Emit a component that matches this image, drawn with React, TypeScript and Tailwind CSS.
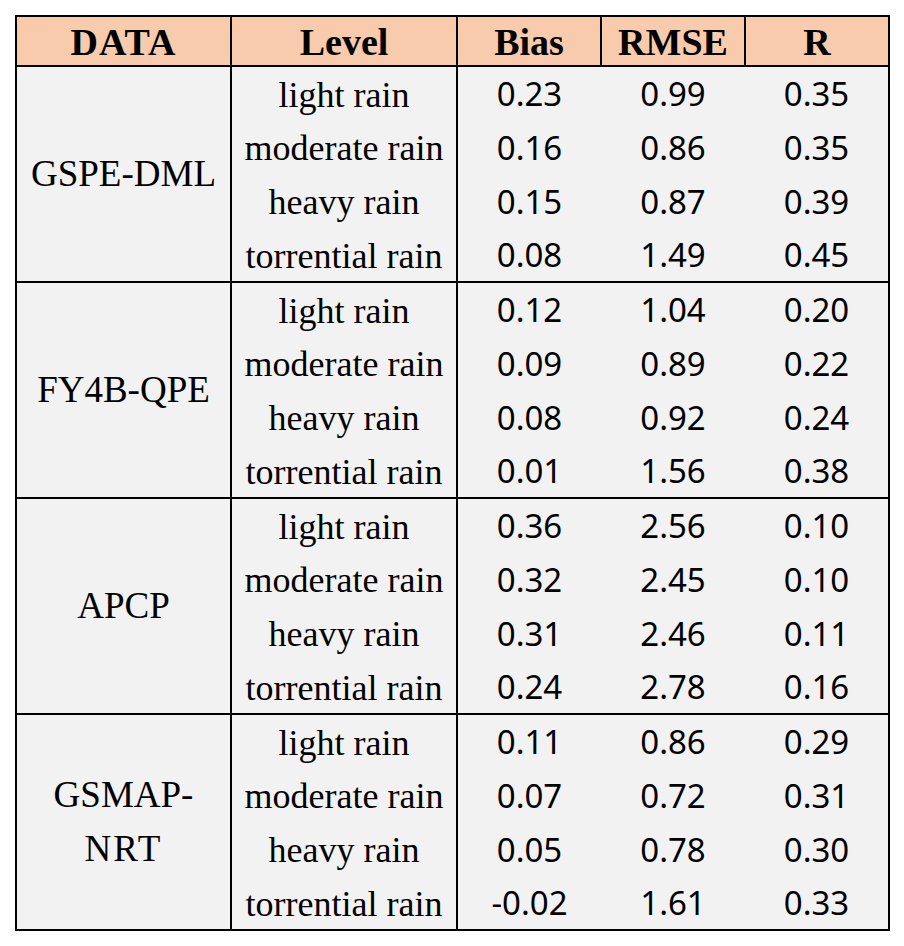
const GROUPS = [
  {
    name: ['GSPE-DML'],
    rows: [
      ['light rain', '0.23', '0.99', '0.35'],
      ['moderate rain', '0.16', '0.86', '0.35'],
      ['heavy rain', '0.15', '0.87', '0.39'],
      ['torrential rain', '0.08', '1.49', '0.45'],
    ],
  },
  {
    name: ['FY4B-QPE'],
    rows: [
      ['light rain', '0.12', '1.04', '0.20'],
      ['moderate rain', '0.09', '0.89', '0.22'],
      ['heavy rain', '0.08', '0.92', '0.24'],
      ['torrential rain', '0.01', '1.56', '0.38'],
    ],
  },
  {
    name: ['APCP'],
    rows: [
      ['light rain', '0.36', '2.56', '0.10'],
      ['moderate rain', '0.32', '2.45', '0.10'],
      ['heavy rain', '0.31', '2.46', '0.11'],
      ['torrential rain', '0.24', '2.78', '0.16'],
    ],
  },
  {
    name: ['GSMAP-', 'NRT'],
    rows: [
      ['light rain', '0.11', '0.86', '0.29'],
      ['moderate rain', '0.07', '0.72', '0.31'],
      ['heavy rain', '0.05', '0.78', '0.30'],
      ['torrential rain', '-0.02', '1.61', '0.33'],
    ],
  },
]

const serif = "font-['Liberation_Serif','Times_New_Roman',serif]"
const sans = "font-['Noto_Sans','Liberation_Sans',sans-serif]"

export default function App() {
  return (
    <div className="min-h-[946px] w-[904px] bg-white pl-[15px] pt-[15px]">
      <table className="w-[873px] table-fixed border-collapse border-2 border-black text-black">
        <colgroup>
          <col className="w-[215px]" />
          <col className="w-[226px]" />
          <col className="w-[144px]" />
          <col className="w-[144px]" />
          <col className="w-[144px]" />
        </colgroup>
        <thead>
          <tr className={`h-[50px] bg-[#f8cbad] ${serif} text-[38px] font-bold leading-none`}>
            <th className="border-2 border-black pt-[2px] tracking-[1px]">DATA</th>
            <th className="border-2 border-black pt-[2px]">Level</th>
            <th className="border-2 border-black pt-[2px]">Bias</th>
            <th className="border-2 border-black pt-[2px]">RMSE</th>
            <th className="border-2 border-black pt-[2px]">R</th>
          </tr>
        </thead>
        {GROUPS.map((group) => (
          <tbody key={group.name.join('')} className="border-2 border-black bg-[#f2f2f2]">
            {group.rows.map((row, i) => (
              <tr key={row[0]} className="h-[54px]">
                {i === 0 && (
                  <td rowSpan={4} className={`border-2 border-black text-center ${serif} text-[37px] leading-[54px]`}>
                    {group.name.map((line) => (
                      <div key={line} className={line === 'NRT' ? 'tracking-[2px]' : ''}>{line}</div>
                    ))}
                  </td>
                )}
                <td className={`border-x-2 border-black pt-[2px] text-center ${serif} text-[36px] leading-none`}>{row[0]}</td>
                <td className={`text-center ${sans} text-[33px] leading-none`}>{row[1]}</td>
                <td className={`text-center ${sans} text-[33px] leading-none`}>{row[2]}</td>
                <td className={`text-center ${sans} text-[33px] leading-none`}>{row[3]}</td>
              </tr>
            ))}
          </tbody>
        ))}
      </table>
    </div>
  )
}
